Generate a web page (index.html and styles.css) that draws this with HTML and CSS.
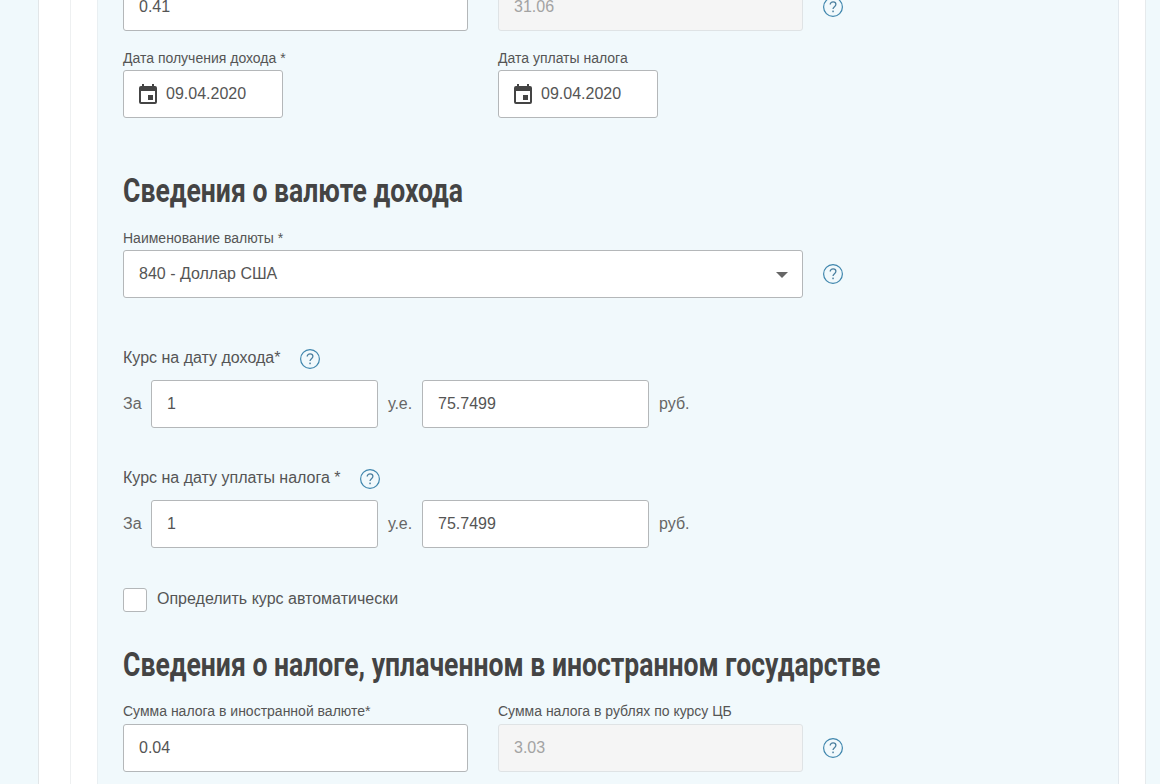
FILE: index.html
```html
<!DOCTYPE html>
<html lang="ru">
<head>
<meta charset="utf-8">
<title>Сведения о валюте дохода</title>
<link rel="stylesheet" href="styles.css">
</head>
<body>
<svg class="defs" width="0" height="0" aria-hidden="true">
  <symbol id="help" viewBox="0 0 20 20">
    <circle cx="10" cy="10" r="9.4" fill="none" stroke="#3f86ad" stroke-width="1.2"/>
    <path d="M7.2 7.6c0-1.7 1.2-2.7 2.9-2.7 1.6 0 2.8 1 2.8 2.4 0 2.3-2.9 2.4-2.9 4.8" fill="none" stroke="#4a7f9f" stroke-width="1.3"/>
    <rect x="9.3" y="13.6" width="1.5" height="1.6" fill="#4a7f9f"/>
  </symbol>
  <symbol id="cal" viewBox="0 0 18 20">
    <path fill="#444" d="M3 0h2v2h8V0h2v2h1a2 2 0 0 1 2 2v14a2 2 0 0 1-2 2H2a2 2 0 0 1-2-2V4a2 2 0 0 1 2-2h1V0zM2 7v11h14V7H2z"/>
    <rect x="9" y="11" width="5" height="5" fill="#444"/>
  </symbol>
</svg>
<div class="shell">
  <div class="inner">
    <main class="panel">
      <div class="row row-top">
        <div class="input w345">0.41</div>
        <div class="input disabled w305">31.06</div>
        <svg class="help"><use href="#help"/></svg>
      </div>
      <div class="row labels-row">
        <div class="field date-field">
          <label class="label">Дата получения дохода *</label>
          <div class="input date"><svg class="cal"><use href="#cal"/></svg>09.04.2020</div>
        </div>
        <div class="field">
          <label class="label">Дата уплаты налога</label>
          <div class="input date"><svg class="cal"><use href="#cal"/></svg>09.04.2020</div>
        </div>
      </div>

      <h2 class="title title-currency">Сведения о валюте дохода</h2>
      <label class="label">Наименование валюты *</label>
      <div class="row">
        <div class="input select">840 - Доллар США<span class="caret"></span></div>
        <svg class="help"><use href="#help"/></svg>
      </div>

      <div class="rate rate-first">
        <div class="rate-label">Курс на дату дохода*<svg class="help help-near"><use href="#help"/></svg></div>
        <div class="rate-row">
          <span class="unit unit-lead">За</span>
          <div class="input w227">1</div>
          <span class="unit unit-mid">у.е.</span>
          <div class="input w227">75.7499</div>
          <span class="unit">руб.</span>
        </div>
      </div>

      <div class="rate rate-second">
        <div class="rate-label">Курс на дату уплаты налога *<svg class="help help-near help-near-second"><use href="#help"/></svg></div>
        <div class="rate-row">
          <span class="unit unit-lead">За</span>
          <div class="input w227">1</div>
          <span class="unit unit-mid">у.е.</span>
          <div class="input w227">75.7499</div>
          <span class="unit">руб.</span>
        </div>
      </div>

      <div class="check-row">
        <span class="checkbox"></span>
        <span class="check-label">Определить курс автоматически</span>
      </div>

      <h2 class="title title-tax">Сведения о налоге, уплаченном в иностранном государстве</h2>
      <div class="row tax-row">
        <div class="field">
          <label class="label">Сумма налога в иностранной валюте*</label>
          <div class="input w345">0.04</div>
        </div>
        <div class="field">
          <label class="label">Сумма налога в рублях по курсу ЦБ</label>
          <div class="input disabled w305">3.03</div>
        </div>
        <svg class="help help-low"><use href="#help"/></svg>
      </div>
    </main>
  </div>
</div>
</body>
</html>
```
FILE: styles.css
```css
* { box-sizing: border-box; }
html, body { height: 784px; overflow: hidden; }
body {
  margin: 0;
  padding: 0 14px 0 38px;
  background: #f0f9fc;
  font-family: "Liberation Sans", Arial, sans-serif;
  color: #555;
}
.defs { position: absolute; }
.shell {
  height: 784px;
  overflow: hidden;
  background: #fff;
  border-left: 1px solid #e2e6e8;
  border-right: 1px solid #e6eaec;
  padding-left: 31px;
}
.inner {
  height: 840px;
  border-left: 1px solid #eef0f1;
  padding: 0 26px;
}
.panel {
  height: 840px;
  background: #f1f9fc;
  border-left: 1px solid #e9eff2;
  border-right: 1px solid #e3e9ee;
  padding: 0 0 0 25px;
}
.row { display: flex; align-items: center; gap: 30px; }
.row-top { margin-top: -17px; }
.labels-row { margin-top: 19px; align-items: flex-start; }
.field { display: flex; flex-direction: column; }
.date-field { width: 345px; }
.label {
  display: block;
  font-size: 14px;
  line-height: 16px;
  height: 20px;
  color: #555;
}
.input {
  height: 48px;
  display: flex;
  align-items: center;
  padding: 0 15px;
  background: #fff;
  border: 1px solid #b4b7b9;
  border-radius: 3px;
  font-size: 16px;
  color: #555;
}
.w345 { width: 345px; }
.w305 { width: 305px; }
.w227 { width: 227px; flex: none; }
.disabled { background: #f5f5f5; border-color: #dfe3e5; color: #a3a3a3; }
.date { width: 160px; }
.cal { width: 18px; height: 20px; margin-right: 9px; flex: none; }
.help { width: 20px; height: 20px; flex: none; margin-left: -10px; }
.help-near { margin-left: 20px; margin-top: 2px; }
.help-near-second { margin-left: 19px; }
.tax-row .help-low { margin-top: 21px; }
.tax-row .input { margin-top: 1px; }
.title {
  margin: 0;
  font-family: "Roboto", sans-serif;
  font-weight: 700;
  font-size: 33px;
  line-height: 40px;
  white-space: nowrap;
  color: #444;
  transform: scaleX(0.805);
  transform-origin: left center;
}
.title-currency { margin-top: 53px; margin-bottom: 19px; }
.title-tax { margin-top: 33px; margin-bottom: 18px; }
.select { width: 680px; position: relative; }
.caret {
  position: absolute;
  right: 14px;
  top: 21px;
  border-left: 6px solid transparent;
  border-right: 6px solid transparent;
  border-top: 6px solid #666;
}
.rate-label {
  display: flex;
  align-items: center;
  height: 20px;
  font-size: 16px;
  color: #555;
  margin-bottom: 12px;
}
.rate-first { margin-top: 50px; }
.rate-second { margin-top: 40px; }
.rate-row { display: flex; align-items: center; gap: 10px; }
.unit { font-size: 16px; color: #666; }
.unit-lead { width: 18px; }
.unit-mid { width: 24px; }
.check-row { display: flex; align-items: center; gap: 10px; margin-top: 40px; }
.checkbox {
  width: 24px;
  height: 24px;
  background: #fff;
  border: 1px solid #b4b7b9;
  border-radius: 3px;
}
.check-label { font-size: 16px; color: #555; position: relative; top: -1px; }
```
